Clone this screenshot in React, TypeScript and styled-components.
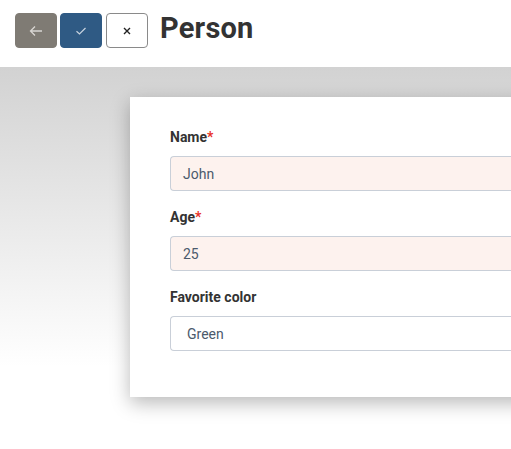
import React from "react";
import styled, { createGlobalStyle } from "styled-components";

const Global = createGlobalStyle`
  html, body { margin: 0; padding: 0; background: #fff; }
  body { font-family: Roboto, "Liberation Sans", sans-serif; overflow: hidden; }
  * { box-sizing: border-box; }
`;

const Page = styled.div`
  width: 511px;
  height: 449px;
  overflow: hidden;
  display: flex;
  flex-direction: column;
`;

const Header = styled.header`
  height: 67px;
  display: flex;
  align-items: flex-start;
  padding: 13px 15px 0;
  gap: 3px;
  flex-shrink: 0;
`;

const Btn = styled.button<{ $variant: "back" | "ok" | "cancel" }>`
  width: 42px;
  height: 35px;
  border-radius: 4px;
  display: flex;
  align-items: center;
  justify-content: center;
  padding: 0;
  margin-right: ${(p) => (p.$variant === "ok" ? "1px" : "0")};
  border: 1px solid
    ${(p) => (p.$variant === "back" ? "#7f7b74" : p.$variant === "ok" ? "#2f5a84" : "#8a8a8a")};
  background: ${(p) => (p.$variant === "back" ? "#7f7b74" : p.$variant === "ok" ? "#2f5a84" : "#ffffff")};
`;

const Title = styled.h1`
  margin: 0 0 0 9px;
  font-size: 29px;
  line-height: 30px;
  font-weight: 700;
  color: #333;
  letter-spacing: 0.2px;
`;

const Main = styled.main`
  flex: 1;
  background: linear-gradient(to bottom, #d2d2d2 0px, #ffffff 300px);
  padding: 30px 0 0 130px;
`;

const Card = styled.section`
  background: #fff;
  width: 420px;
  padding: 30px 0 30px 40px;
  box-shadow: 0 6px 18px rgba(0, 0, 0, 0.28);
`;

const Field = styled.div`
  margin-bottom: 16px;
`;

const Label = styled.label`
  display: block;
  font-size: 14px;
  font-weight: 700;
  color: #333;
  line-height: 20px;
  margin-bottom: 9px;
`;

const Req = styled.span`
  color: #e8322b;
`;

const Input = styled.div<{ $required?: boolean; $indent?: number }>`
  height: 35px;
  border: 1px solid #c9cfd8;
  border-right: none;
  border-radius: 4px 0 0 4px;
  background: ${(p) => (p.$required ? "#fdf2ee" : "#ffffff")};
  color: #4b5a6c;
  font-size: 14px;
  display: flex;
  align-items: center;
  padding-left: ${(p) => p.$indent ?? 12}px;
`;

const Icon = ({ children }: { children: React.ReactNode }) => (
  <svg width="16" height="16" viewBox="0 0 16 16" fill="none">
    {children}
  </svg>
);

export default function App() {
  return (
    <Page>
      <Global />
      <Header>
        <Btn $variant="back">
          <Icon>
            <path d="M14 8H2.5M7 3.5L2.5 8L7 12.5" stroke="#d8d6d2" strokeWidth="1.3" />
          </Icon>
        </Btn>
        <Btn $variant="ok">
          <Icon>
            <path d="M3.5 8.3L6.5 11L12.5 5" stroke="#c8d3df" strokeWidth="1.2" />
          </Icon>
        </Btn>
        <Btn $variant="cancel">
          <Icon>
            <path d="M5 5L11 11M11 5L5 11" stroke="#222" strokeWidth="1.4" />
          </Icon>
        </Btn>
        <Title>Person</Title>
      </Header>
      <Main>
        <Card>
          <Field>
            <Label>
              Name<Req>*</Req>
            </Label>
            <Input $required>John</Input>
          </Field>
          <Field>
            <Label>
              Age<Req>*</Req>
            </Label>
            <Input $required>25</Input>
          </Field>
          <Field>
            <Label>Favorite color</Label>
            <Input $indent={16}>Green</Input>
          </Field>
        </Card>
      </Main>
    </Page>
  );
}
